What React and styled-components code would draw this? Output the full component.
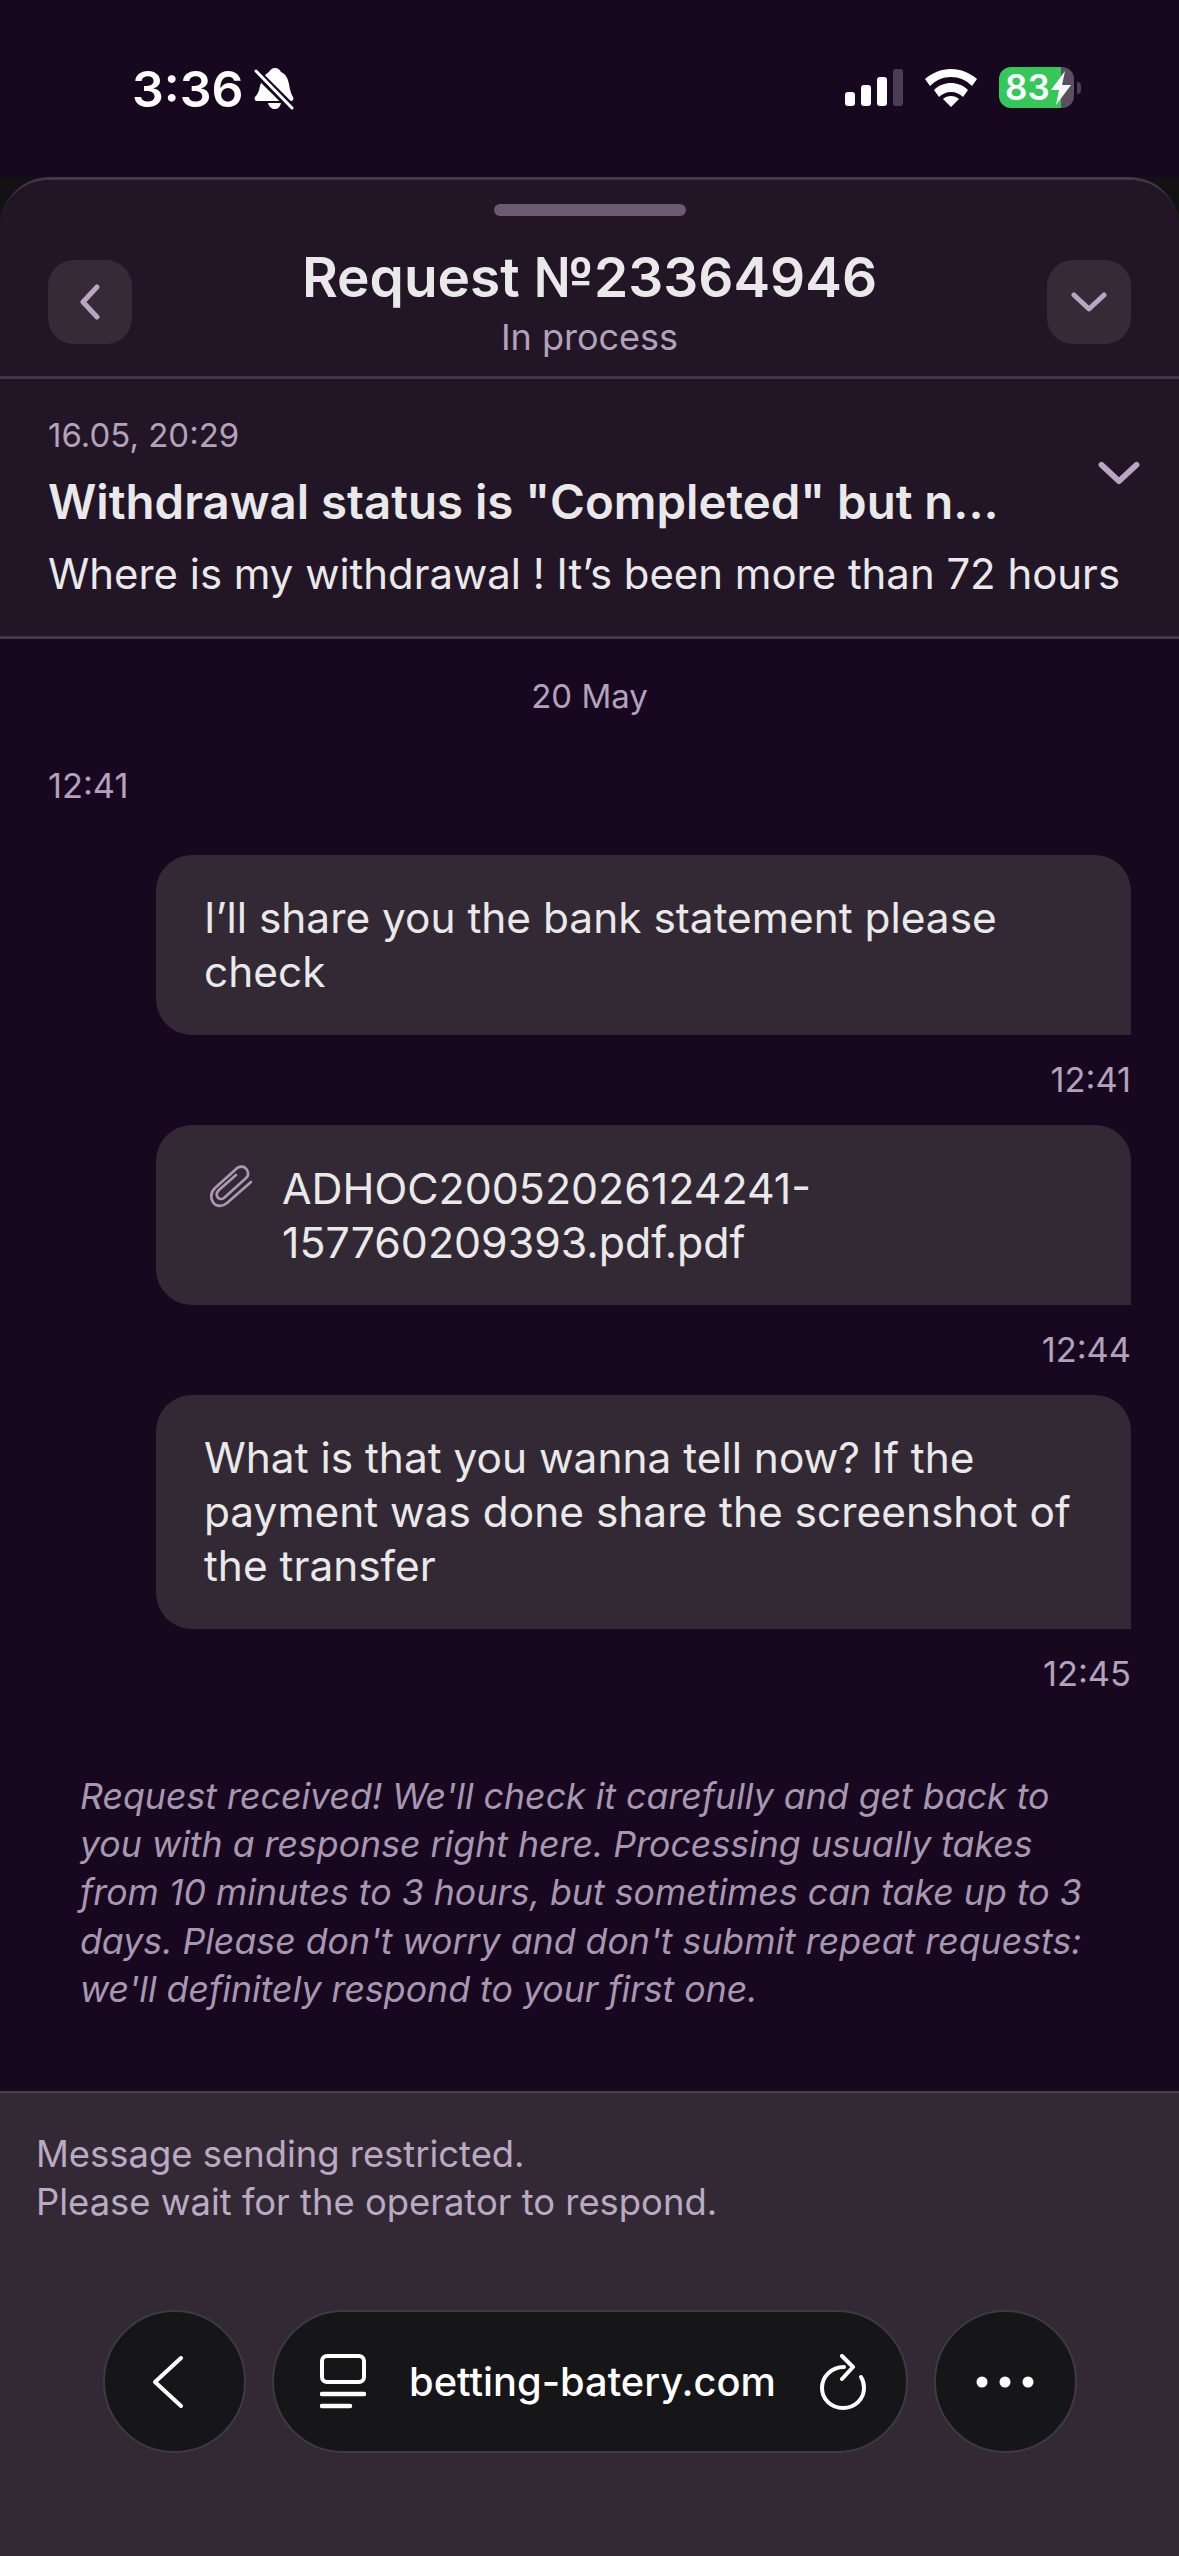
import React from 'react';
import styled, { createGlobalStyle } from 'styled-components';

const GlobalStyle = createGlobalStyle`
  html, body {
    margin: 0;
    padding: 0;
    background: #170820;
  }
  * {
    box-sizing: border-box;
  }
`;

const App = () => (
  <Page>
    <GlobalStyle />
    <StatusBar>
      <Clock>
        <Time>3:36</Time>
        <BellIcon />
      </Clock>
      <StatusIcons>
        <SignalBars>
          <Bar $h={14} />
          <Bar $h={21} />
          <Bar $h={29} />
          <Bar $h={37} $off />
        </SignalBars>
        <WifiIcon />
        <Battery>
          <BatteryCase>
            83
            <BoltIcon />
          </BatteryCase>
          <BatteryNub />
        </Battery>
      </StatusIcons>
    </StatusBar>

    <SheetBack>
      <Sheet>
        <Header>
          <Handle />
          <HeaderRow>
            <IconButton>
              <ChevronLeft />
            </IconButton>
            <HeaderText>
              <Title>Request №23364946</Title>
              <Status>In process</Status>
            </HeaderText>
            <IconButton>
              <ChevronDown width="36" height="20" />
            </IconButton>
          </HeaderRow>
        </Header>

        <Ticket>
          <TicketTop>
            <div>
              <TicketDate>16.05, 20:29</TicketDate>
              <TicketTitle>Withdrawal status is "Completed" but n...</TicketTitle>
            </div>
            <TicketToggle>
              <ChevronDown width="42" height="24" />
            </TicketToggle>
          </TicketTop>
          <TicketText>Where is my withdrawal ! It’s been more than 72 hours</TicketText>
        </Ticket>

        <Chat>
          <DayLabel>20 May</DayLabel>
          <LeftTime>12:41</LeftTime>
          <Bubble>I’ll share you the bank statement please check</Bubble>
          <RightTime>12:41</RightTime>
          <FileBubble>
            <ClipIcon />
            <FileName>ADHOC20052026124241-157760209393.pdf.pdf</FileName>
          </FileBubble>
          <RightTime>12:44</RightTime>
          <Bubble>What is that you wanna tell now? If the payment was done share the screenshot of the transfer</Bubble>
          <RightTime>12:45</RightTime>
          <Notice>
            Request received! We'll check it carefully and get back to you with a response right here. Processing
            usually takes from 10 minutes to 3 hours, but sometimes can take up to 3 days. Please don't worry and
            don't submit repeat requests: we'll definitely respond to your first one.
          </Notice>
        </Chat>

        <Footer>
          <Restricted>
            Message sending restricted.
            <br />
            Please wait for the operator to respond.
          </Restricted>
          <BrowserBar>
            <RoundPill>
              <BackIcon />
            </RoundPill>
            <UrlPill>
              <TabsIcon />
              <Url>betting-batery.com</Url>
              <ReloadIcon />
            </UrlPill>
            <RoundPill>
              <DotsIcon />
            </RoundPill>
          </BrowserBar>
        </Footer>
      </Sheet>
    </SheetBack>
  </Page>
);

const BellIcon = () => (
  <BellSvg width="40" height="44" viewBox="0 0 40 44">
    <path
      fill="#fff"
      d="M21 1c3 0 5 2 6 4 5 2 7 7 8 12 1 6 2 10 4 13 1 2 0 4-2 4H3c-2 0-3-2-2-4 3-3 4-6 5-11l1-3 2-5c2-3 4-5 6-6 1-2 3-4 6-4zM14 36h13c-1 4-3 6-6 6s-6-2-7-6z"
    />
    <path stroke="#170820" strokeWidth="8" d="M-2 1l42 42" />
    <path stroke="#fff" strokeWidth="3" strokeLinecap="round" d="M2 4l36 37" />
  </BellSvg>
);

const WifiIcon = () => (
  <svg width="52" height="38" viewBox="0 0 52 38">
    <path fill="#fff" d="M26 0c10 0 19 4 26 10l-5 7C41 11 34 8 26 8S11 11 5 17l-5-7C7 4 16 0 26 0z" />
    <path fill="#fff" d="M26 14c6 0 12 2 17 7l-5 7c-3-3-7-5-12-5s-9 2-12 5l-5-7c5-5 11-7 17-7z" />
    <path fill="#fff" d="M26 27c3 0 6 1 8 3l-8 8-8-8c2-2 5-3 8-3z" />
  </svg>
);

const BoltIcon = () => (
  <BoltSvg width="20" height="34" viewBox="0 0 20 34">
    <path fill="#fff" d="M14 0L0 19h8L5 34l15-20h-9z" />
  </BoltSvg>
);

const ChevronLeft = () => (
  <svg width="20" height="36" viewBox="0 0 20 36" fill="none">
    <path d="M17 3L3 18l14 15" stroke="#b8a6c4" strokeWidth="5" strokeLinecap="round" strokeLinejoin="round" />
  </svg>
);

const ChevronDown = ({ width, height }) => (
  <svg width={width} height={height} viewBox="0 0 36 20" fill="none">
    <path d="M3 3l15 14L33 3" stroke="#b8a6c4" strokeWidth="5" strokeLinecap="round" strokeLinejoin="round" />
  </svg>
);

const ClipIcon = () => (
  <ClipSvg width="42" height="43" viewBox="0 0 42 43" fill="none">
    <path
      d="M41 17L17 38C11 43 4 41 2 35C0 30 2 26 5 23L25 5C29 0 35 1 37 5C39 9 38 12 35 14L14 33C11 35 8 34 7 31C6 29 7 27 9 25L26 10"
      stroke="#ae98b8"
      strokeWidth="2.6"
      strokeLinecap="round"
    />
  </ClipSvg>
);

const BackIcon = () => (
  <BackSvg width="30" height="52" viewBox="0 0 30 52" fill="none">
    <path d="M28 2L2 26l26 24" stroke="#fff" strokeWidth="4" strokeLinecap="round" strokeLinejoin="round" />
  </BackSvg>
);

const TabsIcon = () => (
  <svg width="46" height="56" viewBox="0 0 46 56" fill="none">
    <rect x="2" y="2" width="42" height="26" rx="5" stroke="#fff" strokeWidth="4" />
    <path d="M2 40h42M2 52h28" stroke="#fff" strokeWidth="4.5" strokeLinecap="round" />
  </svg>
);

const ReloadIcon = () => (
  <svg width="48" height="56" viewBox="0 0 48 56" fill="none">
    <path
      d="M25 13C12 13 3 23 3 34c0 11 9 20 21 20s21-9 21-20c0-4-1-8-3-11"
      stroke="#fff"
      strokeWidth="4"
      strokeLinecap="round"
    />
    <path d="M23 2l11 11-11 12" stroke="#fff" strokeWidth="4" strokeLinecap="round" strokeLinejoin="round" />
  </svg>
);

const DotsIcon = () => (
  <svg width="58" height="12" viewBox="0 0 58 12">
    <circle cx="6" cy="6" r="5.5" fill="#fff" />
    <circle cx="29" cy="6" r="5.5" fill="#fff" />
    <circle cx="52" cy="6" r="5.5" fill="#fff" />
  </svg>
);

const Page = styled.div`
  width: 1179px;
  height: 2556px;
  display: flex;
  flex-direction: column;
  background: #170820;
  font-family: Inter, 'Liberation Sans', sans-serif;
  overflow: hidden;
`;

const StatusBar = styled.div`
  height: 177px;
  flex: none;
  display: flex;
  align-items: flex-start;
  justify-content: space-between;
  padding: 62px 98px 0 132px;
`;

const Clock = styled.div`
  display: flex;
  align-items: center;
  gap: 10px;
  margin-top: 2px;
`;

const Time = styled.span`
  color: #fff;
  font-size: 50px;
  font-weight: 600;
  line-height: 50px;
`;

const BellSvg = styled.svg`
  overflow: hidden;
`;

const StatusIcons = styled.div`
  display: flex;
  align-items: center;
  margin-top: 5px;
`;

const SignalBars = styled.div`
  display: flex;
  align-items: flex-end;
  gap: 6px;
  height: 37px;
  margin-right: 22px;
`;

const Bar = styled.span`
  width: 10px;
  height: ${p => p.$h}px;
  border-radius: 3px;
  background: ${p => (p.$off ? '#4a3f50' : '#fff')};
`;

const Battery = styled.div`
  display: flex;
  align-items: center;
  margin-left: 22px;
  gap: 3px;
`;

const BatteryCase = styled.div`
  position: relative;
  width: 75px;
  height: 41px;
  border-radius: 12px;
  background: linear-gradient(90deg, #34c759 82.5%, #5a5060 82.5%);
  color: #fff;
  font-size: 35px;
  font-weight: 600;
  line-height: 41px;
  padding-left: 6px;
`;

const BoltSvg = styled.svg`
  position: absolute;
  left: 52px;
  top: 4px;
`;

const BatteryNub = styled.span`
  width: 4px;
  height: 12px;
  border-radius: 0 6px 6px 0;
  background: #4a3f50;
`;

const SheetBack = styled.div`
  flex: 1;
  display: flex;
  min-height: 0;
  background: #121212;
`;

const Sheet = styled.div`
  flex: 1;
  display: flex;
  flex-direction: column;
  min-width: 0;
  border-top: 3px solid #43354a;
  border-radius: 50px 50px 0 0;
  background: #170820;
  overflow: hidden;
`;

const Header = styled.div`
  height: 199px;
  flex: none;
  padding-top: 24px;
  background: #221626;
  border-bottom: 3px solid #43354a;
`;

const Handle = styled.div`
  width: 192px;
  height: 12px;
  margin: 0 auto;
  border-radius: 6px;
  background: #6b5a72;
`;

const HeaderRow = styled.div`
  display: flex;
  align-items: flex-start;
  justify-content: space-between;
  padding: 0 48px;
  margin-top: 44px;
`;

const IconButton = styled.div`
  width: 84px;
  height: 84px;
  flex: none;
  display: flex;
  align-items: center;
  justify-content: center;
  border-radius: 26px;
  background: #352a36;
`;

const HeaderText = styled.div`
  display: flex;
  flex-direction: column;
  align-items: center;
  margin-top: -14px;
`;

const Title = styled.div`
  color: #e9e9e9;
  font-size: 55px;
  font-weight: 600;
  line-height: 62px;
`;

const Status = styled.div`
  color: #b3a2bb;
  font-size: 36px;
  line-height: 46px;
  margin-top: 6px;
`;

const Ticket = styled.div`
  height: 260px;
  flex: none;
  padding: 35px 48px 0;
  background: #221626;
  border-bottom: 3px solid #43354a;
`;

const TicketTop = styled.div`
  display: flex;
  justify-content: space-between;
  align-items: center;
`;

const TicketDate = styled.div`
  color: #b3a2bb;
  font-size: 33px;
  line-height: 42px;
`;

const TicketTitle = styled.div`
  color: #e9e9e9;
  font-size: 47.4px;
  font-weight: 600;
  line-height: 56px;
  margin-top: 18px;
  white-space: nowrap;
`;

const TicketToggle = styled.div`
  margin-right: -9px;
  margin-top: 2px;
  display: flex;
`;

const TicketText = styled.div`
  color: #e9e9e9;
  font-size: 41.9px;
  line-height: 54px;
  margin-top: 17px;
  white-space: nowrap;
`;

const Chat = styled.div`
  flex: 1;
  min-height: 0;
  display: flex;
  flex-direction: column;
  padding: 36px 48px 0;
`;

const DayLabel = styled.div`
  color: #b3a2bb;
  font-size: 33px;
  line-height: 42px;
  text-align: center;
`;

const LeftTime = styled.div`
  color: #b3a2bb;
  font-size: 34.4px;
  line-height: 42px;
  margin-top: 48px;
`;

const RightTime = styled.div`
  color: #b3a2bb;
  font-size: 34.4px;
  line-height: 42px;
  text-align: right;
  margin-top: 24px;
  margin-bottom: 24px;
`;

const Bubble = styled.div`
  margin-left: 108px;
  padding: 36px 48px 36px;
  border-radius: 36px 36px 0 36px;
  background: #332935;
  color: #e9e9e9;
  font-size: 42.4px;
  line-height: 54px;
  &:nth-child(3) {
    margin-top: 48px;
  }
`;

const FileBubble = styled(Bubble)`
  display: flex;
  align-items: flex-start;
  gap: 30px;
  padding-left: 54px;
  font-size: 42.9px;
`;

const ClipSvg = styled.svg`
  flex: none;
  margin-top: 4px;
`;

const FileName = styled.div`
  width: 640px;
  word-break: break-word;
`;

const Notice = styled.div`
  color: #a897b0;
  font-size: 35.7px;
  font-style: italic;
  line-height: 48.2px;
  padding: 0 32px;
  margin-top: 53px;
`;

const Footer = styled.div`
  height: 465px;
  flex: none;
  padding: 37px 36px 0;
  background: #332935;
  border-top: 2px solid #4a3e50;
`;

const Restricted = styled.div`
  color: #bbaac3;
  font-size: 36.4px;
  line-height: 48px;
`;

const BrowserBar = styled.div`
  display: flex;
  justify-content: center;
  gap: 26px;
  margin-top: 84px;
`;

const RoundPill = styled.div`
  width: 143px;
  height: 143px;
  display: flex;
  align-items: center;
  justify-content: center;
  border-radius: 50%;
  background: #161518;
  border: 2px solid #3e3a42;
`;

const BackSvg = styled.svg`
  margin-right: 12px;
`;

const UrlPill = styled.div`
  width: 636px;
  height: 143px;
  display: flex;
  align-items: center;
  justify-content: space-between;
  padding: 0 38px 0 46px;
  border-radius: 72px;
  background: #161518;
  border: 2px solid #3e3a42;
`;

const Url = styled.span`
  color: #fff;
  font-size: 39.8px;
  font-weight: 500;
  white-space: nowrap;
`;

export default App;
